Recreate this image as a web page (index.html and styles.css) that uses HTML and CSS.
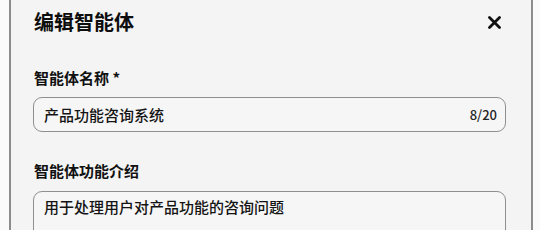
FILE: index.html
```html
<!DOCTYPE html>
<html lang="zh-CN">
<head>
  <meta charset="UTF-8">
  <meta name="viewport" content="width=device-width, initial-scale=1.0">
  <title>编辑智能体</title>
  <link rel="stylesheet" href="styles.css">
</head>
<body>
  <div class="dialog">
    <div class="dialog-header">
      <h2 class="dialog-title">编辑智能体</h2>
      <button class="close-btn" aria-label="关闭">
        <svg width="13" height="13" viewBox="0 0 13 13">
          <path d="M1.5 1.5 L11.5 11.5 M11.5 1.5 L1.5 11.5" stroke="#111" stroke-width="2.8" stroke-linecap="round" fill="none"/>
        </svg>
      </button>
    </div>

    <div class="field name-field">
      <label class="field-label">智能体名称 *</label>
      <div class="input-box">
        <span class="input-text">产品功能咨询系统</span>
        <span class="counter">8/20</span>
      </div>
    </div>

    <div class="field desc-field">
      <label class="field-label">智能体功能介绍</label>
      <div class="textarea-box">用于处理用户对产品功能的咨询问题</div>
    </div>
  </div>
</body>
</html>
```

FILE: styles.css
```css
/* Page */
body {
  margin: 0;
  height: 230px;
  overflow: hidden;
  background: #fafafa;
  font-family: "Noto Sans CJK SC", "Noto Sans", sans-serif;
  color: #1a1a1a;
}

/* Dialog */
.dialog {
  margin-left: 9px;
  width: 524px;
  height: 230px;
  box-sizing: border-box;
  padding: 8px 25px 0 22px;
  overflow: hidden;
  background: #f4f4f4;
  border-left: 2px solid #8c8c8c;
  border-right: 2px solid #8c8c8c;
}
.dialog-header {
  display: flex;
  justify-content: space-between;
  align-items: center;
  height: 28px;
}
.dialog-title {
  margin: 0 0 0 1px;
  font-size: 20px;
  line-height: 28px;
  font-weight: 700;
  color: #0d0d0d;
}
.close-btn {
  width: 24px;
  height: 24px;
  padding: 0;
  border: none;
  background: none;
  display: flex;
  align-items: center;
  justify-content: center;
}

/* Fields */
.field-label {
  display: block;
  margin-left: 1px;
  font-size: 15px;
  line-height: 20px;
  font-weight: 700;
  color: #111;
}
.name-field {
  margin-top: 32px;
}
.name-field .field-label {
  margin-bottom: 9px;
}
.desc-field {
  margin-top: 29px;
}
.desc-field .field-label {
  margin-bottom: 10px;
}

.input-box {
  display: flex;
  justify-content: space-between;
  align-items: center;
  height: 35px;
  box-sizing: border-box;
  padding: 0 8px 0 10px;
  border: 1.5px solid #8f8f8f;
  border-radius: 9px;
  background: #f6f6f6;
}
.input-text {
  font-size: 15px;
  font-weight: 500;
  color: #141414;
}
.counter {
  font-size: 13px;
  font-weight: 500;
  color: #222;
}

.textarea-box {
  height: 60px;
  box-sizing: border-box;
  padding: 5px 10px;
  border: 1.5px solid #8f8f8f;
  border-radius: 9px;
  background: #f6f6f6;
  font-size: 15px;
  font-weight: 500;
  line-height: 20px;
  color: #141414;
}
```
